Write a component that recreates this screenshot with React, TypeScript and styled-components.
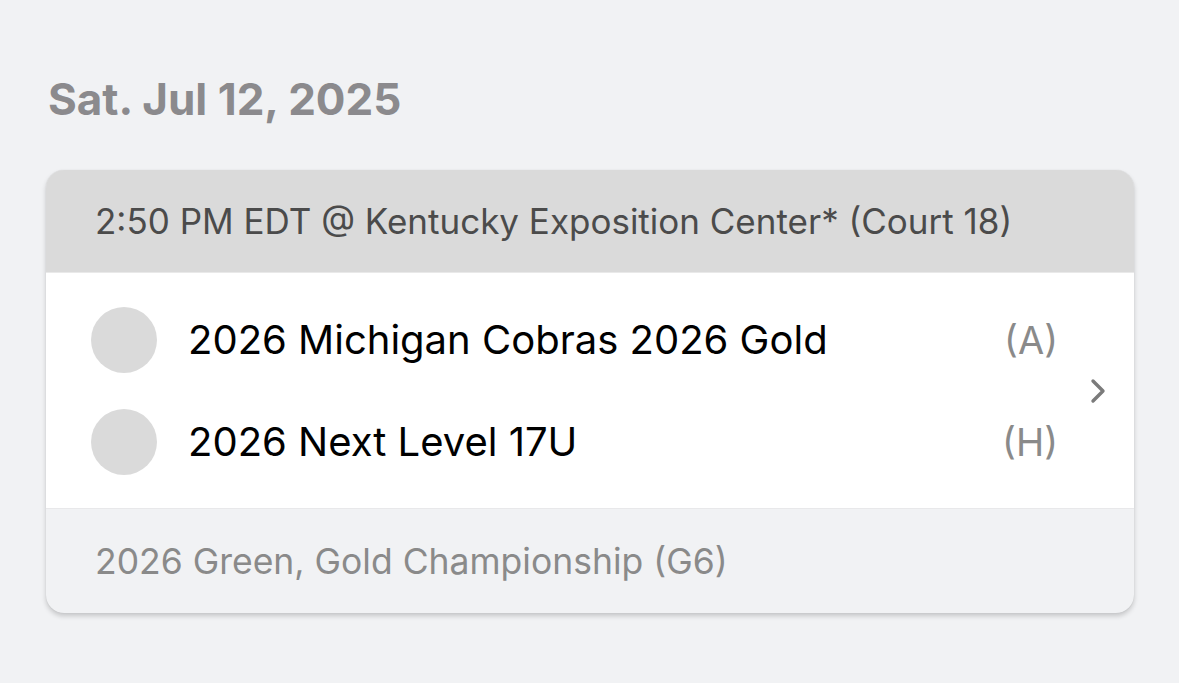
import React from "react"
import styled, { createGlobalStyle } from "styled-components"

const GlobalStyle = createGlobalStyle`
  html, body {
    margin: 0;
    padding: 0;
    background: #f1f2f4;
    font-family: Inter, "Open Sans", "Liberation Sans", sans-serif;
  }
`

interface Team {
  name: string
  side: string
}

const teams: Team[] = [
  { name: "2026 Michigan Cobras 2026 Gold", side: "(A)" },
  { name: "2026 Next Level 17U", side: "(H)" },
]

export default function App() {
  return (
    <Page>
      <GlobalStyle />
      <DateHeading>Sat. Jul 12, 2025</DateHeading>
      <Card>
        <CardHeader>2:50 PM EDT @ Kentucky Exposition Center* (Court 18)</CardHeader>
        <CardBody>
          <TeamList>
            {teams.map(team => (
              <TeamRow key={team.name}>
                <Avatar />
                <TeamName>{team.name}</TeamName>
                <Side>{team.side}</Side>
              </TeamRow>
            ))}
          </TeamList>
          <Chevron viewBox="0 0 16 26">
            <path d="M3 3l10 10-10 10" />
          </Chevron>
        </CardBody>
        <CardFooter>2026 Green, Gold Championship (G6)</CardFooter>
      </Card>
    </Page>
  )
}

const Page = styled.div`
  width: 1179px;
  height: 683px;
  box-sizing: border-box;
  padding: 72px 45px 0 46px;
`

const DateHeading = styled.h1`
  margin: 0 0 44px 2px;
  font-size: 44px;
  font-weight: 650;
  color: #8b8a8d;
  line-height: 54px;
`

const Card = styled.div`
  border-radius: 18px;
  overflow: hidden;
  background: #f1f2f4;
  box-shadow: 0 3px 5px rgba(0, 0, 0, 0.18), 0 0 1px rgba(0, 0, 0, 0.15);
`

const CardHeader = styled.div`
  height: 102px;
  display: flex;
  align-items: center;
  padding-left: 49px;
  background: #dadada;
  border-bottom: 1px solid #e9e9e9;
  font-size: 35px;
  color: #4b4b4b;
`

const CardBody = styled.div`
  display: flex;
  align-items: center;
  background: #ffffff;
  height: 235px;
  padding: 0 28px 0 45px;
  border-bottom: 1px solid #e8e8ea;
`

const TeamList = styled.div`
  flex: 1;
  display: flex;
  flex-direction: column;
  gap: 36px;
`

const TeamRow = styled.div`
  display: flex;
  align-items: center;
`

const Avatar = styled.div`
  width: 66px;
  height: 66px;
  border-radius: 50%;
  background: #dadada;
  flex: none;
`

const TeamName = styled.div`
  flex: 1;
  margin-left: 31px;
  font-size: 40px;
  color: #000;
`

const Side = styled.div`
  font-size: 38px;
  color: #8a8a8a;
`

const Chevron = styled.svg`
  width: 16px;
  height: 26px;
  margin-left: 32px;
  fill: none;
  stroke: #7b7b7b;
  stroke-width: 3.4;
  stroke-linecap: round;
  stroke-linejoin: round;
`

const CardFooter = styled.div`
  height: 104px;
  display: flex;
  align-items: center;
  padding-left: 49px;
  font-size: 35.5px;
  color: #8a8a8a;
`
